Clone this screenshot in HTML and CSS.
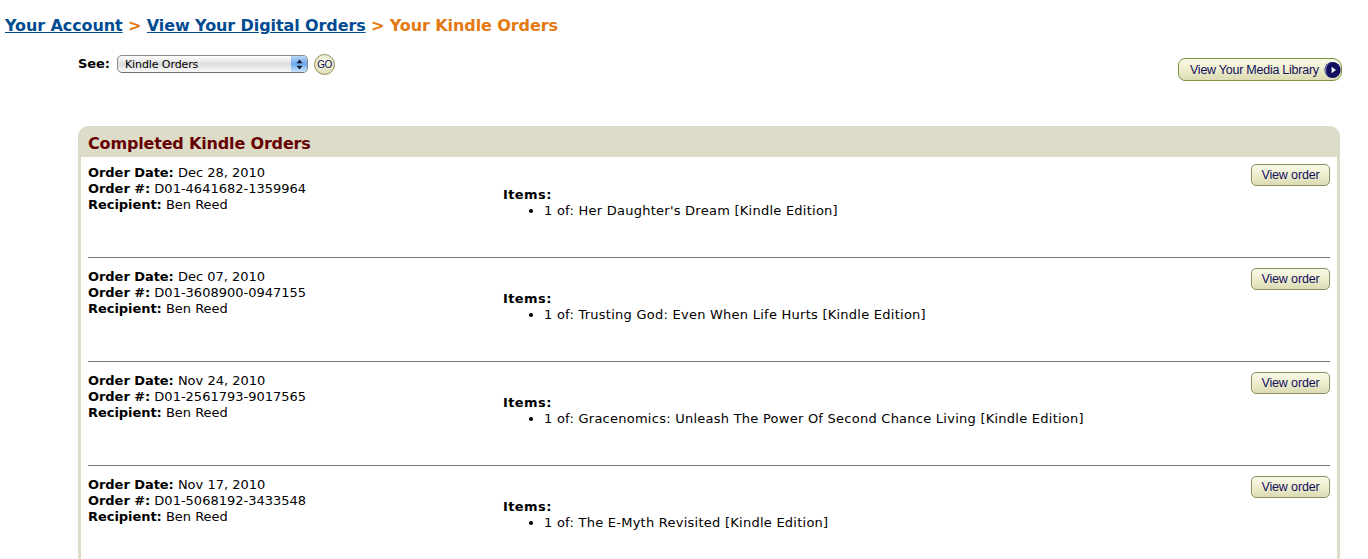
FILE: index.html
```html
<!DOCTYPE html>
<html lang="en">
<head>
  <meta charset="UTF-8">
  <meta name="viewport" content="width=device-width, initial-scale=1.0">
  <title>Your Kindle Orders</title>
  <link rel="stylesheet" href="styles.css">
</head>
<body>
  <h1 class="crumbs">
    <a href="#">Your Account</a> <span>&gt;</span> <a href="#">View Your Digital Orders</a> <span>&gt; Your Kindle Orders</span>
  </h1>

  <div class="toolbar">
    <div class="see">
      <b>See:</b>
      <div class="select">
        <span class="select-text">Kindle Orders</span>
        <span class="select-arrows">
          <svg width="7" height="11" viewBox="0 0 7 11"><path d="M3.5 0.5 6.5 4.2H.5zM3.5 10.5 .5 6.8H6.5z" fill="#10182a"/></svg>
        </span>
      </div>
      <button class="go">GO</button>
    </div>
    <a href="#" class="btn btn-media">
      View Your Media Library
      <svg class="media-icon" width="18" height="18" viewBox="0 0 18 18">
        <circle cx="9" cy="9" r="8.5" fill="#10105e"/>
        <path d="M1 9A8 8 0 0 1 6 1.6 10 10 0 0 0 4.5 15.6 8 8 0 0 1 1 9z" fill="#7f80b0"/>
        <path d="M8 5.5 12.5 9 8 12.5z" fill="#fff"/>
      </svg>
    </a>
  </div>

  <div class="orders">
    <h2 class="orders-title">Completed Kindle Orders</h2>
    <div class="orders-body">

      <div class="order">
        <div class="order-info">
          <div><b>Order Date:</b> Dec 28, 2010</div>
          <div><b>Order #:</b> D01-4641682-1359964</div>
          <div><b>Recipient:</b> Ben Reed</div>
        </div>
        <div class="order-items">
          <b>Items:</b>
          <ul><li>1 of: Her Daughter's Dream [Kindle Edition]</li></ul>
        </div>
        <a href="#" class="btn btn-view">View order</a>
      </div>

      <div class="order">
        <div class="order-info">
          <div><b>Order Date:</b> Dec 07, 2010</div>
          <div><b>Order #:</b> D01-3608900-0947155</div>
          <div><b>Recipient:</b> Ben Reed</div>
        </div>
        <div class="order-items">
          <b>Items:</b>
          <ul><li>1 of: Trusting God: Even When Life Hurts [Kindle Edition]</li></ul>
        </div>
        <a href="#" class="btn btn-view">View order</a>
      </div>

      <div class="order">
        <div class="order-info">
          <div><b>Order Date:</b> Nov 24, 2010</div>
          <div><b>Order #:</b> D01-2561793-9017565</div>
          <div><b>Recipient:</b> Ben Reed</div>
        </div>
        <div class="order-items">
          <b>Items:</b>
          <ul><li>1 of: Gracenomics: Unleash The Power Of Second Chance Living [Kindle Edition]</li></ul>
        </div>
        <a href="#" class="btn btn-view">View order</a>
      </div>

      <div class="order">
        <div class="order-info">
          <div><b>Order Date:</b> Nov 17, 2010</div>
          <div><b>Order #:</b> D01-5068192-3433548</div>
          <div><b>Recipient:</b> Ben Reed</div>
        </div>
        <div class="order-items">
          <b>Items:</b>
          <ul><li>1 of: The E-Myth Revisited [Kindle Edition]</li></ul>
        </div>
        <a href="#" class="btn btn-view">View order</a>
      </div>

    </div>
  </div>
</body>
</html>
```

FILE: styles.css
```css
* {
  box-sizing: border-box;
  margin: 0;
  padding: 0;
}

html, body {
  height: 100%;
  overflow: hidden;
}

body {
  font-family: "DejaVu Sans", Verdana, sans-serif;
  font-size: 13px;
  line-height: 16px;
  color: #000;
  background: #fff;
  padding: 16px 26px 0 5px;
}

b {
  letter-spacing: -0.05px;
}

.crumbs {
  font-size: 16px;
  line-height: 20px;
  font-weight: bold;
  letter-spacing: -0.1px;
  color: #e47911;
  white-space: nowrap;
}

.crumbs a {
  color: #004b91;
}

.toolbar {
  display: flex;
  justify-content: space-between;
  align-items: flex-start;
  margin: 17px 0 0 73px;
  height: 73px;
}

.see {
  display: flex;
  align-items: center;
  gap: 6px;
  height: 22px;
}

.select {
  display: flex;
  width: 191px;
  height: 18px;
  margin-left: 1px;
  border: 1px solid #8a8a8a;
  border-bottom-color: #6f6f6f;
  border-radius: 5px;
  overflow: hidden;
  background: linear-gradient(#fff 0%, #dedede 50%, #f8f8f8 100%);
  font-size: 11px;
  line-height: 17px;
}

.select-text {
  flex: 1;
  padding-left: 7px;
  letter-spacing: -0.1px;
}

.select-arrows {
  display: flex;
  align-items: center;
  justify-content: center;
  width: 16px;
  background: linear-gradient(#b9d6f5 0%, #6aa9ec 50%, #cbe6fc 100%);
}

.go {
  width: 21px;
  height: 21px;
  border: 1px solid #8f8f5c;
  border-radius: 50%;
  background: radial-gradient(circle at 50% 35%, #fbfbe9 0%, #e4e3bd 70%, #c9c89c 100%);
  color: #10105e;
  font-family: "Liberation Sans", Arial, sans-serif;
  font-size: 10px;
  letter-spacing: -0.6px;
}

.btn {
  display: flex;
  align-items: center;
  font-family: "Liberation Sans", Arial, sans-serif;
  font-size: 12.5px;
  color: #10105e;
  text-decoration: none;
  white-space: nowrap;
  background: linear-gradient(#f8f8e8 0%, #f3f2d6 35%, #dcdbb4 100%);
}

.btn-media {
  width: 164px;
  height: 23px;
  margin-top: 5px;
  padding-left: 11px;
  border: 1px solid #7c9440;
  border-radius: 7px 9px 9px 7px;
  letter-spacing: -0.25px;
}

.media-icon {
  margin-left: 5px;
}

.orders {
  margin: 0 2px 0 73px;
  border: solid #dcdcc9;
  border-width: 0 3px;
  border-radius: 11px 11px 0 0;
  height: 600px;
}

.orders-title {
  margin: 0 -3px;
  height: 31px;
  padding: 8px 10px 0;
  background: #dcdcc9;
  border-radius: 11px 11px 0 0;
  font-size: 16px;
  line-height: 20px;
  font-weight: bold;
  letter-spacing: -0.17px;
  color: #660000;
}

.orders-body {
  padding: 0 7px;
}

.order {
  display: flex;
  align-items: flex-start;
  height: 104px;
  padding-top: 10px;
  border-bottom: 1px solid #777;
}

.order:first-child {
  height: 101px;
  padding-top: 7px;
}

.order-info {
  width: 415px;
  margin-top: 1px;
}

.order-items {
  flex: 1;
  padding-top: 23px;
  letter-spacing: 0.25px;
}

.order-items b {
  letter-spacing: 0.4px;
}

.order-items ul {
  padding-left: 41px;
}

.btn-view {
  justify-content: center;
  width: 79px;
  height: 22px;
  border: 1px solid #8f8f62;
  border-radius: 5px;
  letter-spacing: -0.15px;
}
```
